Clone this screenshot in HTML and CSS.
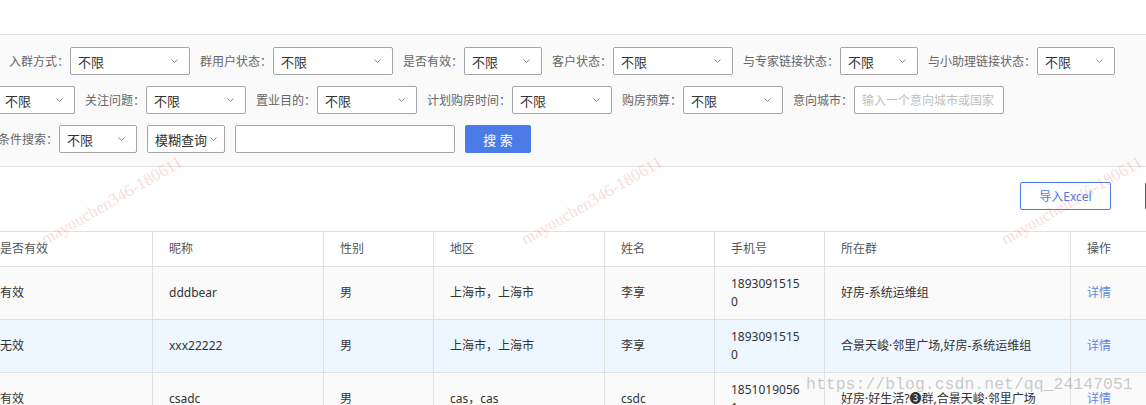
FILE: index.html
```html
<!DOCTYPE html>
<html lang="zh-CN">
<head>
<meta charset="utf-8">
<title>客户列表</title>
<link rel="stylesheet" href="styles.css">
</head>
<body>
<div class="page">
  <div class="topbar"></div>

  <section class="filters">
    <div class="frow frow-1">
      <label class="flabel">入群方式：</label>
      <div class="select w120"><span class="val">不限</span><svg class="chev" viewBox="0 0 7 4"><polyline points="0.5,0.5 3.5,3.5 6.5,0.5"/></svg></div>
      <label class="flabel">群用户状态：</label>
      <div class="select w120"><span class="val">不限</span><svg class="chev" viewBox="0 0 7 4"><polyline points="0.5,0.5 3.5,3.5 6.5,0.5"/></svg></div>
      <label class="flabel">是否有效：</label>
      <div class="select w78"><span class="val">不限</span><svg class="chev" viewBox="0 0 7 4"><polyline points="0.5,0.5 3.5,3.5 6.5,0.5"/></svg></div>
      <label class="flabel">客户状态：</label>
      <div class="select w120"><span class="val">不限</span><svg class="chev" viewBox="0 0 7 4"><polyline points="0.5,0.5 3.5,3.5 6.5,0.5"/></svg></div>
      <label class="flabel">与专家链接状态：</label>
      <div class="select w78"><span class="val">不限</span><svg class="chev" viewBox="0 0 7 4"><polyline points="0.5,0.5 3.5,3.5 6.5,0.5"/></svg></div>
      <label class="flabel">与小助理链接状态：</label>
      <div class="select w78"><span class="val">不限</span><svg class="chev" viewBox="0 0 7 4"><polyline points="0.5,0.5 3.5,3.5 6.5,0.5"/></svg></div>
    </div>

    <div class="frow frow-2">
      <div class="select w78"><span class="val">不限</span><svg class="chev" viewBox="0 0 7 4"><polyline points="0.5,0.5 3.5,3.5 6.5,0.5"/></svg></div>
      <label class="flabel">关注问题：</label>
      <div class="select w100"><span class="val">不限</span><svg class="chev" viewBox="0 0 7 4"><polyline points="0.5,0.5 3.5,3.5 6.5,0.5"/></svg></div>
      <label class="flabel">置业目的：</label>
      <div class="select w100"><span class="val">不限</span><svg class="chev" viewBox="0 0 7 4"><polyline points="0.5,0.5 3.5,3.5 6.5,0.5"/></svg></div>
      <label class="flabel">计划购房时间：</label>
      <div class="select w100"><span class="val">不限</span><svg class="chev" viewBox="0 0 7 4"><polyline points="0.5,0.5 3.5,3.5 6.5,0.5"/></svg></div>
      <label class="flabel">购房预算：</label>
      <div class="select w100"><span class="val">不限</span><svg class="chev" viewBox="0 0 7 4"><polyline points="0.5,0.5 3.5,3.5 6.5,0.5"/></svg></div>
      <label class="flabel">意向城市：</label>
      <input class="textin w150" type="text" placeholder="输入一个意向城市或国家">
    </div>

    <div class="frow frow-3">
      <label class="flabel">条件搜索：</label>
      <div class="select w78"><span class="val">不限</span><svg class="chev" viewBox="0 0 7 4"><polyline points="0.5,0.5 3.5,3.5 6.5,0.5"/></svg></div>
      <div class="select w78 sp tight"><span class="val">模糊查询</span><svg class="chev" viewBox="0 0 7 4"><polyline points="0.5,0.5 3.5,3.5 6.5,0.5"/></svg></div>
      <input class="textin w220 sp" type="text">
      <button class="btn-primary sp">搜 索</button>
    </div>
  </section>

  <div class="toolbar">
    <button class="btn-outline">导入Excel</button>
    <button class="btn-dark">导出Excel</button>
  </div>

  <table class="grid">
    <colgroup>
      <col class="c-valid"><col class="c-nick"><col class="c-sex"><col class="c-area">
      <col class="c-name"><col class="c-phone"><col class="c-group"><col class="c-op">
    </colgroup>
    <thead>
      <tr>
        <th>是否有效</th><th>昵称</th><th>性别</th><th>地区</th>
        <th>姓名</th><th>手机号</th><th>所在群</th><th>操作</th>
      </tr>
    </thead>
    <tbody>
      <tr>
        <td>有效</td><td>dddbear</td><td>男</td><td>上海市，上海市</td>
        <td>李享</td><td><span class="phone">18930915150</span></td><td>好房-系统运维组</td><td><a class="link">详情</a></td>
      </tr>
      <tr class="hover">
        <td>无效</td><td>xxx22222</td><td>男</td><td>上海市，上海市</td>
        <td>李享</td><td><span class="phone">18930915150</span></td><td>合景天峻·邻里广场,好房-系统运维组</td><td><a class="link">详情</a></td>
      </tr>
      <tr>
        <td>有效</td><td>csadc</td><td>男</td><td>cas，cas</td>
        <td>csdc</td><td><span class="phone">18510190561</span></td><td>好房·好生活?❸群,合景天峻·邻里广场</td><td><a class="link">详情</a></td>
      </tr>
    </tbody>
  </table>

  <div class="wm wm1">mayouchen346-180611</div>
  <div class="wm wm2">mayouchen346-180611</div>
  <div class="wm wm3">mayouchen346-180611</div>
  <div class="csdn">https://blog.csdn.net/qq_24147051</div>
</div>
</body>
</html>
```

FILE: styles.css
```css
html, body {
  margin: 0;
  padding: 0;
  width: 1146px;
  height: 405px;
  overflow: hidden;
  background: #fff;
}

body {
  font-family: "Noto Sans", "Noto Sans CJK SC", sans-serif;
  font-size: 12px;
  color: #333;
}

.page {
  position: relative;
}

.topbar {
  height: 34px;
  border-bottom: 1px solid #e3e3e3;
  background: #fff;
}

/* ---------- filters ---------- */
.filters {
  background: #fafafa;
  padding: 12px 0 13px;
  border-bottom: 1px solid #e3e3e3;
}

.frow {
  display: flex;
  align-items: center;
  height: 28px;
  white-space: nowrap;
}
.frow + .frow { margin-top: 11px; }
.frow-1 { padding-left: 9px; }
.frow-2 { margin-left: -3px; }
.frow-3 { margin-left: -2px; }

.flabel {
  font-size: 12px;
  line-height: 18px;
  padding-top: 1px;
  color: #666;
  margin-right: 1px;
}
.select + .flabel,
.textin + .flabel { margin-left: 10px; }
.sp { margin-left: 10px; }

.select {
  box-sizing: border-box;
  height: 28px;
  display: flex;
  align-items: center;
  justify-content: space-between;
  background: #fff;
  border: 1px solid #a4a4a4;
  border-radius: 2px;
  padding: 0 11px 0 7px;
  flex: none;
}
.select.tight {
  justify-content: flex-start;
  gap: 3px;
  padding-right: 6px;
}
.select .val {
  font-size: 13px;
  color: #333;
  white-space: nowrap;
}
.chev {
  width: 7px;
  height: 4px;
  flex: none;
  fill: none;
  stroke: #8a8a8a;
  stroke-width: 1;
}
.w78 { width: 78px; }
.w100 { width: 100px; }
.w120 { width: 120px; }
.w150 { width: 150px; }
.w220 { width: 220px; }

.textin {
  box-sizing: border-box;
  height: 28px;
  border: 1px solid #a4a4a4;
  border-radius: 2px;
  background: #fff;
  padding: 0 7px;
  font-family: inherit;
  font-size: 12px;
  color: #333;
  outline: none;
  flex: none;
}
.textin::placeholder { color: #c0c0c0; }

.btn-primary {
  box-sizing: border-box;
  width: 66px;
  height: 28px;
  border: none;
  border-radius: 2px;
  background: #4a7be6;
  color: #fff;
  font-family: inherit;
  font-size: 13px;
  padding: 0;
  flex: none;
}

/* ---------- toolbar ---------- */
.toolbar {
  display: flex;
  justify-content: flex-end;
  gap: 34px;
  height: 64px;
  box-sizing: border-box;
  padding: 15px 11px 0 0;
  margin-right: -100px;
  background: #fff;
}
.btn-outline,
.btn-dark {
  box-sizing: border-box;
  height: 28px;
  border-radius: 2px;
  background: #fff;
  font-family: inherit;
  font-size: 12px;
  padding: 0;
}
.btn-outline {
  width: 91px;
  border: 1px solid #4a7be6;
  color: #4a7be6;
}
.btn-dark {
  width: 90px;
  border: 1px solid #555;
  color: #333;
}

/* ---------- table ---------- */
.grid {
  margin-left: -17px;
  border-collapse: collapse;
  table-layout: fixed;
  width: 1197px;
}
.c-valid { width: 169px; }
.c-nick { width: 171px; }
.c-sex { width: 110px; }
.c-area { width: 171px; }
.c-name { width: 110px; }
.c-phone { width: 110px; }
.c-group { width: 246px; }
.c-op { width: 110px; }

.grid th,
.grid td {
  border: 1px solid #e0e0e0;
  padding: 8px 16px;
  line-height: 18px;
  text-align: left;
  vertical-align: middle;
  font-size: 12px;
  white-space: normal;
}
.grid th {
  font-weight: normal;
  color: #555;
  background: #fff;
}
.grid tbody tr { background: #fafafa; }
.grid tbody tr.hover { background: #eef6ff; }
.grid td { color: #333; }

.phone {
  display: block;
  width: 72px;
  word-break: break-all;
}
.link {
  color: #5f87e6;
  cursor: pointer;
}

/* ---------- watermarks (overlay) ---------- */
.wm {
  position: absolute;
  top: 191px;
  width: 170px;
  text-align: center;
  line-height: 20px;
  font-family: "Liberation Serif", serif;
  font-size: 17px;
  color: rgba(235, 120, 120, 0.28);
  transform: rotate(-30deg);
  pointer-events: none;
  white-space: nowrap;
}
.wm1 { left: 27px; }
.wm2 { left: 507px; }
.wm3 { left: 987px; }

.csdn {
  position: absolute;
  left: 806px;
  top: 374px;
  line-height: 22px;
  font-family: "Liberation Mono", monospace;
  font-size: 16.5px;
  color: rgba(140, 140, 140, 0.45);
  pointer-events: none;
  white-space: nowrap;
}
```
